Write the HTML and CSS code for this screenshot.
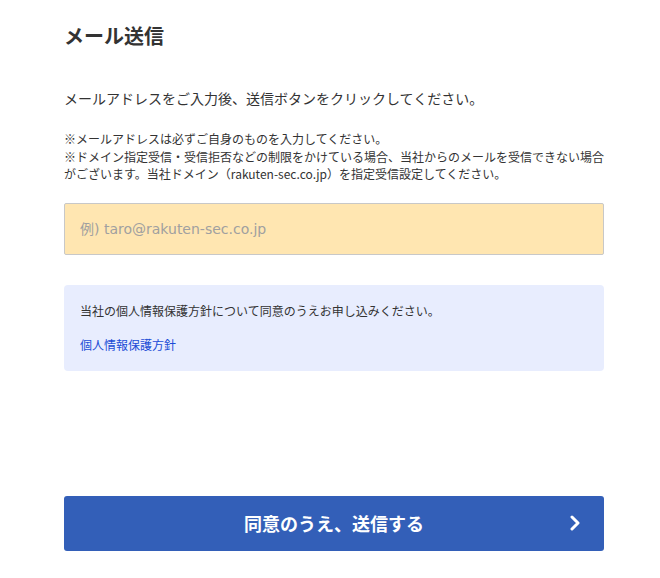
FILE: index.html
```html
<!DOCTYPE html>
<html lang="ja">
<head>
  <meta charset="UTF-8" />
  <title>メール送信</title>
  <link rel="stylesheet" href="styles.css">
</head>
<body>
  <main class="page">
    <h1 class="title">メール送信</h1>

    <p class="lead">メールアドレスをご入力後、送信ボタンをクリックしてください。</p>

    <p class="notes">
      ※メールアドレスは必ずご自身のものを入力してください。<br>
      ※ドメイン指定受信・受信拒否などの制限をかけている場合、当社からのメールを受信できない場合がございます。当社ドメイン（rakuten-sec.co.jp）を指定受信設定してください。
    </p>

    <input type="email" class="mail-input" placeholder="例) taro@rakuten-sec.co.jp">

    <div class="policy">
      <p class="policy-text">当社の個人情報保護方針について同意のうえお申し込みください。</p>
      <a href="#" class="policy-link">個人情報保護方針</a>
    </div>

    <button type="button" class="submit">
      <span>同意のうえ、送信する</span>
      <svg class="chevron" width="12" height="16" viewBox="0 0 12 16">
        <path d="M3 2 L9 8 L3 14" fill="none" stroke="#fff" stroke-width="3" stroke-linecap="round" stroke-linejoin="round"/>
      </svg>
    </button>
  </main>
</body>
</html>
```

FILE: styles.css
```css
body {
  margin: 0;
  padding: 0;
  background: #fff;
  font-family: "Noto Sans CJK JP", "Noto Sans", sans-serif;
  color: #333;
}

.page {
  width: 540px;
  padding: 20px 0 0 64px;
}

.title {
  margin: 0;
  font-size: 20px;
  font-weight: bold;
  line-height: 32px;
}

.lead {
  margin: 35px 0 0;
  font-size: 14px;
  line-height: 22px;
}

.notes {
  margin: 21px 0 0;
  font-size: 12px;
  line-height: 17.5px;
}

.mail-input {
  display: block;
  box-sizing: border-box;
  width: 540px;
  height: 52px;
  margin-top: 20px;
  padding: 0 15px;
  background: #ffe6b1;
  border: 1px solid #c8c8c8;
  border-radius: 2px;
  font-family: "DejaVu Sans", "Noto Sans CJK JP", sans-serif;
  font-size: 14px;
  color: #333;
  outline: none;
}

.mail-input::placeholder {
  color: #a0a0a0;
}

.policy {
  margin-top: 30px;
  padding: 16px 16px 16px;
  background: #e8edfe;
  border-radius: 4px;
  font-size: 12px;
  line-height: 20px;
}

.policy-text {
  margin: 0 0 14px;
}

.policy-link {
  color: #1a4cd6;
  text-decoration: none;
}

.submit {
  position: relative;
  display: flex;
  justify-content: center;
  align-items: center;
  width: 540px;
  height: 55px;
  margin-top: 125px;
  border: none;
  border-radius: 3px;
  background: #335fb8;
  color: #fff;
  font-family: inherit;
  font-size: 18px;
  font-weight: bold;
  cursor: pointer;
}

.chevron {
  position: absolute;
  right: 23px;
  top: 19px;
}
```
